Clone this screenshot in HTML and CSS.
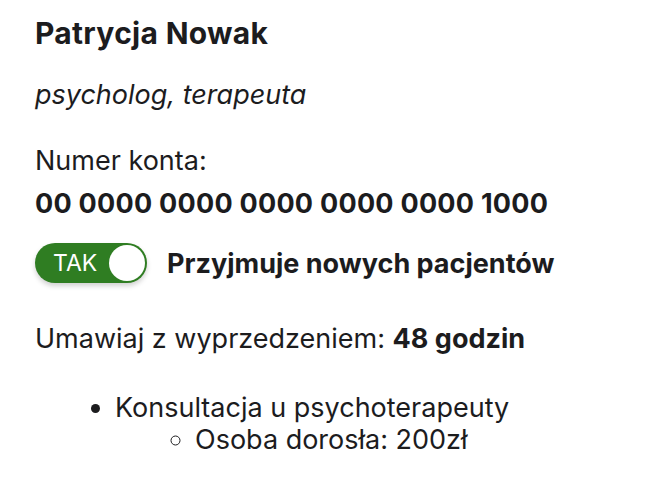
FILE: index.html
```html
<!DOCTYPE html>
<html lang="pl">
<head>
<meta charset="utf-8">
<link rel="stylesheet" href="styles.css">
</head>
<body>
<div class="card">
  <h1 class="name">Patrycja Nowak</h1>
  <p class="role">psycholog, terapeuta</p>
  <p class="label">Numer konta:</p>
  <p class="account">00 0000 0000 0000 0000 0000 1000</p>
  <div class="toggle-row">
    <div class="toggle">
      <span class="toggle-text">TAK</span>
      <span class="knob"></span>
    </div>
    <span class="toggle-label">Przyjmuje nowych pacjentów</span>
  </div>
  <p class="advance">Umawiaj z wyprzedzeniem: <strong>48 godzin</strong></p>
  <ul class="services">
    <li>Konsultacja u psychoterapeuty
      <ul class="prices">
        <li>Osoba dorosła: 200zł</li>
      </ul>
    </li>
  </ul>
</div>
</body>
</html>
```
FILE: styles.css
```css
html, body {
  margin: 0;
  padding: 0;
  background: #ffffff;
}
body {
  font-family: Inter, "Noto Sans", sans-serif;
  color: #1c1c1e;
  font-size: 27px;
  line-height: 40px;
}
.card {
  padding: 13px 35px 0 35px;
}
.name {
  margin: 0;
  font-size: 30px;
  line-height: 40px;
  font-weight: 700;
  letter-spacing: 0.3px;
}
.role {
  margin: 22px 0 0 0;
  font-style: italic;
}
.label {
  margin: 26px 0 0 0;
}
.account {
  margin: 3px 0 0 0;
  font-weight: 700;
  letter-spacing: 0.25px;
}
.toggle-row {
  margin-top: 18px;
  display: flex;
  align-items: center;
  gap: 20px;
}
.toggle {
  width: 112px;
  height: 40px;
  box-sizing: border-box;
  border-radius: 20px;
  background: #2f7d22;
  display: flex;
  align-items: center;
  justify-content: space-between;
  padding: 0 2px 0 18px;
  box-shadow: 0 3px 5px rgba(0, 0, 0, 0.18);
  flex: none;
}
.toggle-text {
  color: #ffffff;
  font-size: 23px;
  line-height: 40px;
}
.knob {
  width: 36px;
  height: 36px;
  border-radius: 50%;
  background: #ffffff;
}
.toggle-label {
  font-weight: 700;
  line-height: 40px;
  padding-top: 2px;
}
.advance {
  margin: 35px 0 0 0;
}
.services {
  margin: 33px 0 0 0;
  padding-left: 80px;
  list-style: disc;
  line-height: 32px;
}
.prices {
  margin: 0;
  padding-left: 80px;
  list-style: circle;
}
```
